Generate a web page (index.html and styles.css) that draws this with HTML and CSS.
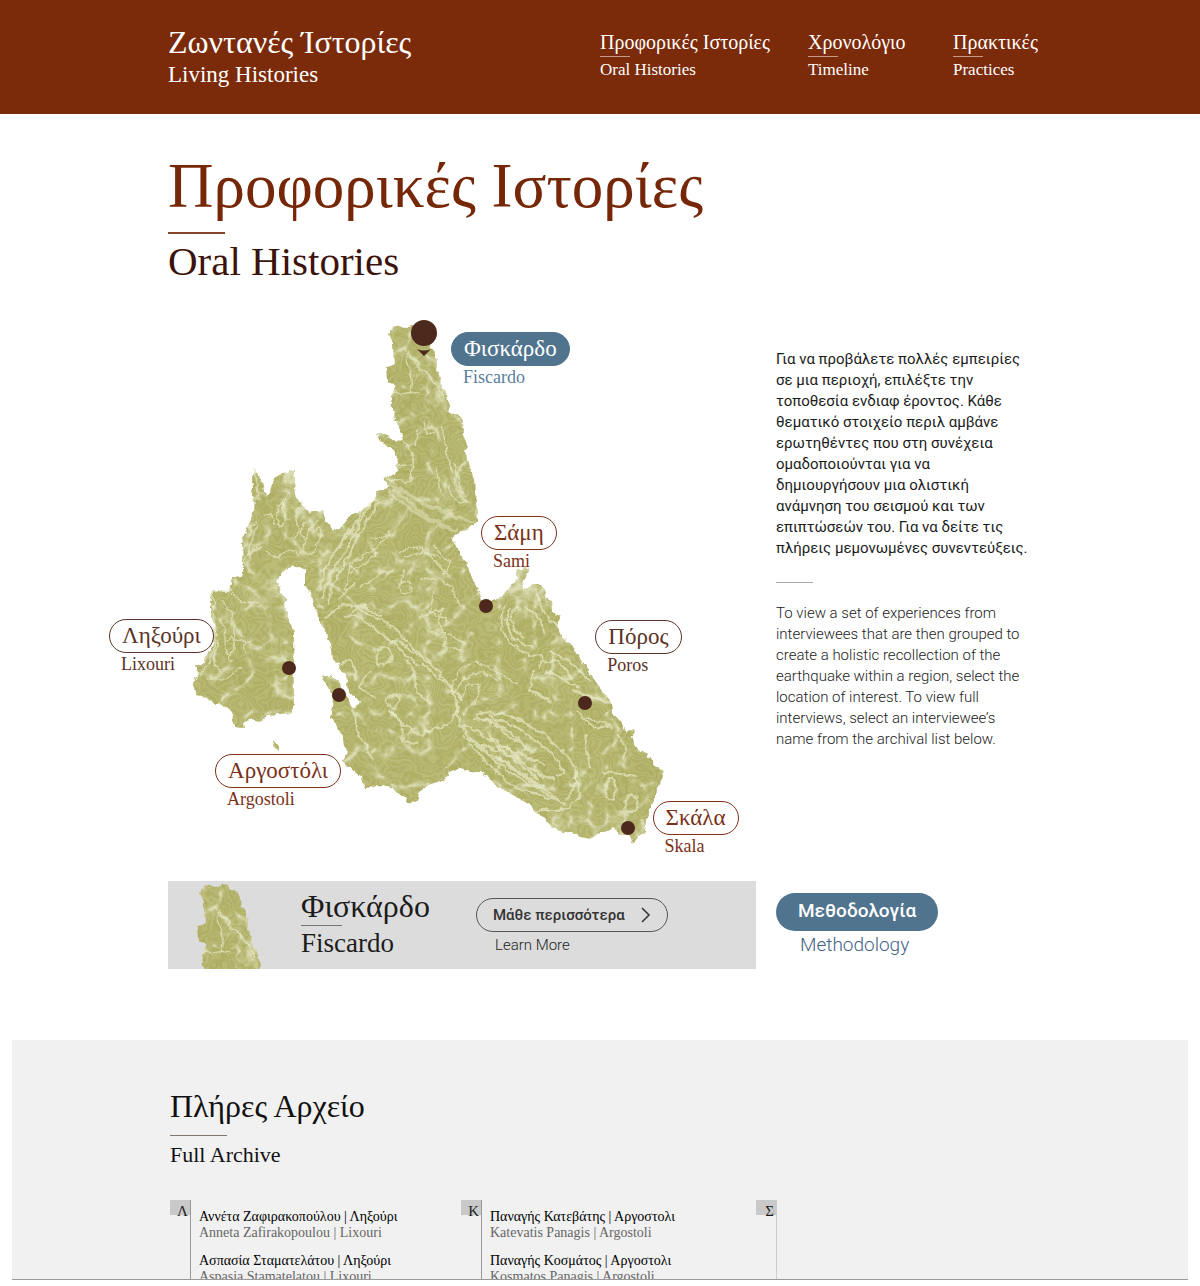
FILE: index.html
```html
<!DOCTYPE html>
<html lang="el">
<head>
<meta charset="utf-8">
<meta name="viewport" content="width=device-width, initial-scale=1">
<title>Προφορικές Ιστορίες | Oral Histories</title>
<link rel="stylesheet" href="styles.css">
</head>
<body>
<header class="site-header">
  <a class="brand" href="#">
    <span class="brand-el">Ζωντανές Ίστορίες</span>
    <span class="brand-en" lang="en">Living Histories</span>
  </a>
  <nav class="site-nav">
    <a href="#"><span class="nav-el">Προφορικές Ιστορίες</span><span class="nav-en" lang="en">Oral Histories</span></a>
    <a href="#"><span class="nav-el">Χρονολόγιο</span><span class="nav-en" lang="en">Timeline</span></a>
    <a href="#"><span class="nav-el">Πρακτικές</span><span class="nav-en" lang="en">Practices</span></a>
  </nav>
</header>

<main>
  <div class="page-title">
    <h1>Προφορικές Ιστορίες</h1>
    <p lang="en">Oral Histories</p>
  </div>

  <div class="explore">
    <div class="map">
      <svg class="island" viewBox="100 310 650 550" aria-hidden="true">
        <defs>
          <filter id="terrain" filterUnits="userSpaceOnUse" x="180" y="310" width="500" height="550" color-interpolation-filters="sRGB">
            <feTurbulence type="fractalNoise" baseFrequency="0.12" numOctaves="3" seed="4" result="rough"/>
            <feDisplacementMap in="SourceGraphic" in2="rough" scale="7" xChannelSelector="R" yChannelSelector="G" result="land"/>
            <feTurbulence type="fractalNoise" baseFrequency="0.02" numOctaves="4" seed="11"/>
            <feColorMatrix values="0 0 0 0 0.86  0 0 0 0 0.87  0 0 0 0 0.68  1 0 0 0 0.04"/>
            <feComponentTransfer result="lines"><feFuncA type="table" tableValues="0 .25 .05 .3 .05 .3 .05 .3 .05 .3 .05 .3 .05 .35 .05 .3 .1 .4 .1 .35 .1 .4 .1 .4 .1 .4 .1 .4 .1 .4"/></feComponentTransfer>
            <feComposite in="lines" in2="land" operator="in" result="contours"/>
            <feTurbulence type="turbulence" baseFrequency="0.028" numOctaves="3" seed="7"/>
            <feColorMatrix values="0 0 0 0 0.91  0 0 0 0 0.92  0 0 0 0 0.8  .9 0 0 0 0.1"/>
            <feComponentTransfer result="creases"><feFuncA type="table" tableValues=".8 .8 .8 .65 .32 .12 .04 0 0 0 0 0 0 0 0 0 0 0 0 0 0"/></feComponentTransfer>
            <feComposite in="creases" in2="land" operator="in" result="ridges"/>
            <feMerge><feMergeNode in="land"/><feMergeNode in="contours"/><feMergeNode in="ridges"/></feMerge>
          </filter>
          <g id="island-shape" filter="url(#terrain)">
            <path fill="#abaa5e" d="M389 333L395 326L405 329L412 325L424 330L433 350L437 360L436 370L441 377L440 385L445 390L448 400L450 406L448 412L453 415L461 415L462 423L463 433L467 445L465 452L468 460L471 470L474 480L475 492L477 503L478 513L475 523L468 528L457 534L451 539L458 547L462 557L468 567L472 578L480 593L482 601L495 601L502 597L508 588L515 583L517 570L525 566L529 572L523 583L523 590L533 585L540 585L547 593L545 597L552 602L553 612L561 617L557 625L562 637L573 648L582 662L592 677L602 690L612 703L613 713L622 725L627 733L634 730L632 737L640 752L647 753L653 765L661 770L662 780L656 793L651 807L647 820L646 832L638 837L633 843L630 836L622 833L613 829L603 831L593 838L580 836L567 832L553 828L543 817L527 803L513 795L497 786L490 777L477 772L460 768L450 772L443 780L428 785L420 792L418 802L407 801L393 788L383 785L373 787L365 788L362 778L350 768L342 762L347 752L343 737L338 727L330 718L333 700L327 685L322 677L330 674L338 683L345 695L352 708L356 707L359 703L356 695L349 694L348 682L342 672L338 663L332 657L330 642L322 623L317 613L310 593L304 585L304 570L297 567L290 566L282 572L277 582L280 592L287 598L284 610L291 625L293 633L294 713L267 715L260 722L253 720L243 723L244 729L235 728L232 713L223 704L217 705L205 697L197 695L193 682L200 673L194 666L203 663L212 643L215 627L212 610L210 603L213 591L228 592L233 578L243 575L243 563L242 543L248 527L253 513L254 497L252 477L256 471L262 482L265 495L270 492L273 480L283 473L295 472L295 482L298 500L310 513L323 510L325 520L332 530L343 527L348 517L360 513L375 500L377 490L390 488L385 477L395 475L398 463L395 448L386 448L377 434L388 435L395 443L402 438L398 423L393 413L391 402L396 388L388 380L387 367L394 365L393 343ZM273 740L277 745L281 747L279 750L275 748Z"/>
            <g fill="none" stroke="#e6e8c6" stroke-opacity=".75" stroke-width="1.5" stroke-linejoin="round">
              <path d="M405 350C412 362 424 357 419 372M405 353C409 372 417 380 409 395M415 363L430 378L445 398M394 393C405 395 412 390 420 394M402 438C414 450 416 462 410 482M397 466L413 464L410 482L388 480M418 430L415 445M424 420L426 436L435 432M440 425C448 440 444 460 454 472M453 462C460 470 456 488 466 496M448 485L453 500L470 503M436 467L440 492"/>
              <path stroke-width="3" stroke-opacity=".5" d="M393 489C410 500 420 518 448 527M389 485C411 494 428 512 474 521M388 491C408 508 429 526 459 530M400 487C416 500 430 508 452 512"/>
              <path stroke-width="2" d="M376 498C356 514 350 536 334 554C324 565 323 580 318 590M371 506C356 520 354 542 340 560C329 573 324 590 322 600M379 503C364 520 358 541 346 562C334 580 330 590 329 606M360 520C350 524 345 540 338 546"/>
              <path d="M282 503C270 518 283 535 285 518C288 511 278 505 282 503M255 470L259 500M318 520C298 540 303 562 314 550C326 537 320 520 316 530M292 540L309 520M248 529C266 510 252 538 244 565M247 555L262 547M267 550C280 570 287 540 300 556M262 515L270 512L274 525M302 500L295 522L304 540"/>
              <path d="M212 592C216 627 218 640 209 662L199 677M214 592L230 590L243 604L260 602M221 600L232 613L235 640L243 640L246 652M218 618C229 628 222 650 230 662M205 679L224 680L242 667M227 640C238 630 235 660 228 654M218 640L213 663L223 673"/>
              <path d="M390 529C384 545 366 556 354 560C344 570 350 581 344 590M400 552C414 542 430 553 442 560M404 558L425 551L446 572M397 589C403 575 416 580 410 592C402 599 396 585 404 570M380 552L350 574M384 570L359 589M371 538L391 534M337 600L355 582M420 580C438 572 450 582 460 605M435 546L450 564L443 575"/>
              <path stroke-width="2" d="M325 618L336 608C349 600 365 613 382 620C400 630 410 645 424 660M344 618C358 610 368 625 380 632L418 665M350 615L360 605L382 616M377 651C389 641 398 657 387 663C374 670 375 655 380 653M389 696C400 690 404 704 394 708C382 707 384 696 390 694M405 658L414 670L417 691L430 705M340 665C349 652 359 670 354 680M370 670L360 688L375 698M398 640C414 655 437 665 446 682L456 692M390 711L403 725L402 741L417 743M421 663L447 685L463 700"/>
              <path d="M421 617L443 608C431 626 450 633 443 646L461 650M426 632L449 634L466 646M436 589L429 612L450 621M450 689C460 658 480 660 493 670L518 684M453 697C464 671 485 666 497 682M460 702L467 685L480 685L475 705"/>
              <path stroke-width="2" d="M504 603C495 634 512 648 530 656C550 653 546 660 537 668M510 609C502 634 518 645 534 647M519 604C508 615 510 634 525 637M525 607L540 619L545 635M538 593L543 612L556 625M533 672L530 690L552 702M540 662L557 660L573 678M545 671L565 681L580 688M550 652L570 661L590 681"/>
              <path stroke-width="2" d="M573 690L593 697L612 703M577 712C587 725 605 715 611 728M581 718L598 729L610 725M458 702C453 723 465 735 480 745L516 758L545 779M461 735C483 748 495 761 510 772L565 805M467 738L500 760L525 777L560 800M462 725C485 735 510 745 530 770L555 780M470 745L510 785L566 804M475 715C501 705 535 725 556 745C572 758 580 771 575 785L566 800M481 722C505 715 526 734 547 749C562 763 568 780 556 775"/>
              <path stroke-width="2" d="M475 718L505 728L527 748M490 715L507 735L535 753M500 745L545 765M488 738L540 781M495 755L545 788M575 772L580 798L565 810L535 810M605 786C608 770 620 785 614 797C606 805 604 790 609 781M630 795C622 803 625 817 632 813C641 806 639 795 630 795M617 735L627 750L622 760M585 735L590 770M604 772L637 776M452 690L459 708L447 725L419 735L390 712M355 706C350 735 370 744 372 760"/>
            </g>
          </g>
        </defs>
        <use href="#island-shape"/>
        <g fill="#4c291c">
          <circle cx="424" cy="333" r="13"/>
          <path d="M417 349Q424 352 431 349L424 356Z"/>
          <circle cx="486" cy="606" r="7"/>
          <circle cx="289" cy="668" r="7"/>
          <circle cx="339" cy="695" r="7"/>
          <circle cx="585" cy="703" r="7"/>
          <circle cx="628" cy="828" r="7"/>
        </g>
      </svg>
      <a class="place place-fiscardo is-active" href="#fiscardo"><span class="pill">Φισκάρδο</span><span class="place-en" lang="en">Fiscardo</span></a>
      <a class="place place-sami" href="#sami"><span class="pill">Σάμη</span><span class="place-en" lang="en">Sami</span></a>
      <a class="place place-lixouri" href="#lixouri"><span class="pill">Ληξούρι</span><span class="place-en" lang="en">Lixouri</span></a>
      <a class="place place-poros" href="#poros"><span class="pill">Πόρος</span><span class="place-en" lang="en">Poros</span></a>
      <a class="place place-argostoli" href="#argostoli"><span class="pill">Αργοστόλι</span><span class="place-en" lang="en">Argostoli</span></a>
      <a class="place place-skala" href="#skala"><span class="pill">Σκάλα</span><span class="place-en" lang="en">Skala</span></a>
    </div>

    <div class="intro">
      <p class="intro-el">Για να προβάλετε πολλές εμπειρίες<br>σε μια περιοχή, επιλέξτε την<br>τοποθεσία ενδιαφ έροντος. Κάθε<br>θεματικό στοιχείο περιλ αμβάνε<br>ερωτηθέντες που στη συνέχεια<br>ομαδοποιούνται για να<br>δημιουργήσουν μια ολιστική<br>ανάμνηση του σεισμού και των<br>επιπτώσεών του. Για να δείτε τις<br>πλήρεις μεμονωμένες συνεντεύξεις.</p>
      <hr>
      <p class="intro-en" lang="en">To view a set of experiences from<br>interviewees that are then grouped to<br>create a holistic recollection of the<br>earthquake within a region, select the<br>location of interest. To view full<br>interviews, select an interviewee’s<br>name from the archival list below.</p>
    </div>

    <section class="selected" id="fiscardo">
      <svg class="selected-map" viewBox="380 322 75 88" aria-hidden="true"><use href="#island-shape"/></svg>
      <div class="selected-name">
        <h2>Φισκάρδο</h2>
        <p lang="en">Fiscardo</p>
      </div>
      <div class="learn">
        <button class="learn-button" type="button" aria-describedby="learn-en">Μάθε περισσότερα
          <svg viewBox="0 0 10 16" aria-hidden="true"><path d="M1 1L8 8L1 15" fill="none" stroke="currentColor" stroke-width="1.5"/></svg>
        </button>
        <span class="learn-en" id="learn-en" lang="en">Learn More</span>
      </div>
    </section>

    <div class="method">
      <button class="method-button" type="button" aria-describedby="method-en">Μεθοδολογία</button>
      <span class="method-en" id="method-en" lang="en">Methodology</span>
    </div>
  </div>
</main>

<section class="archive">
  <h2>Πλήρες Αρχείο</h2>
  <p class="archive-en" lang="en">Full Archive</p>
  <div class="archive-columns">
    <div class="group">
      <h3><span>Λ</span></h3>
      <ul>
        <li><a href="#"><b>Αννέτα Ζαφιρακοπούλου | Ληξούρι</b><span lang="en">Anneta Zafirakopoulou | Lixouri</span></a></li>
        <li><a href="#"><b>Ασπασία Σταματελάτου | Ληξούρι</b><span lang="en">Aspasia Stamatelatou | Lixouri</span></a></li>
      </ul>
    </div>
    <div class="group">
      <h3><span>Κ</span></h3>
      <ul>
        <li><a href="#"><b>Παναγής Κατεβάτης | Αργοστολι</b><span lang="en">Katevatis Panagis | Argostoli</span></a></li>
        <li><a href="#"><b>Παναγής Κοσμάτος | Αργοστολι</b><span lang="en">Kosmatos Panagis | Argostoli</span></a></li>
      </ul>
    </div>
    <div class="group group-light">
      <h3><span>Σ</span></h3>
    </div>
  </div>
</section>
</body>
</html>
```

FILE: styles.css
```css
* {
  box-sizing: border-box;
}

body {
  margin: 0;
  background: #fff;
  color: #1c1c1c;
  font-family: "Liberation Serif", "Times New Roman", serif;
}

h1, h2, h3, p, ul {
  margin: 0;
  padding: 0;
  font-weight: 400;
}

a {
  color: inherit;
  text-decoration: none;
}

.site-header {
  display: grid;
  grid-template-columns: minmax(0, 1fr) minmax(0, 1fr);
  padding: 24px 14%;
  background: #7b2b0a;
  color: #fff;
}

.brand-el,
.brand-en,
.nav-el,
.nav-en {
  display: block;
  white-space: nowrap;
}

.brand-el {
  font-size: 32px;
  line-height: 36px;
}

.brand-en {
  font-size: 23px;
  line-height: 30px;
}

.site-nav {
  display: grid;
  grid-template-columns: 208px 145px auto;
  padding-top: 6px;
}

.nav-el {
  font-size: 20px;
  line-height: 24px;
}

.nav-en {
  font-size: 17px;
  line-height: 24px;
}

.nav-en::before {
  content: "";
  display: block;
  width: 30px;
  height: 1px;
  margin: 2px 0 1px;
  background: #c79a86;
}

main {
  padding: 40px 14% 71px;
}

.page-title h1 {
  color: #762708;
  font-size: 63px;
  line-height: 64px;
  white-space: nowrap;
}

.page-title p {
  color: #3c130a;
  font-size: 41px;
  line-height: 52px;
}

.page-title p::before {
  content: "";
  display: block;
  width: 57px;
  height: 2px;
  margin: 14px 0 1px;
  background: #87452b;
}

.explore {
  display: grid;
  grid-template-columns: 588fr 256fr;
  column-gap: 20px;
  row-gap: 21px;
  margin-top: 23px;
}

.map {
  position: relative;
  margin: 0 6px 0 -68px;
}

.island {
  display: block;
  width: 100%;
}

.place {
  position: absolute;
  color: #7b3018;
}

.pill {
  display: block;
  height: 34px;
  padding: 0 12px;
  border: 1px solid currentColor;
  border-radius: 17px;
  background: #fff;
  font-size: 23px;
  line-height: 31px;
  white-space: nowrap;
}

.place-en {
  display: block;
  padding-left: 12px;
  font-size: 18px;
  line-height: 22px;
}

.place.is-active {
  color: #5a7f9c;
}

.is-active .pill {
  border-color: #50748e;
  background: #50748e;
  color: #fff;
}

.place-fiscardo { left: 54%; top: 4%; }
.place-sami { left: 58.6%; top: 37.4%; }
.place-lixouri { left: 1.4%; top: 56.2%; color: #5c3327; }
.place-poros { left: 76.2%; top: 56.4%; color: #5c3327; }
.place-argostoli { left: 17.7%; top: 80.7%; }
.place-skala { left: 85%; top: 89.2%; }

.intro {
  padding-top: 39px;
  font-family: Roboto, sans-serif;
  font-size: 15px;
  line-height: 21px;
  white-space: nowrap;
}

.intro-en {
  color: #222;
  font-weight: 300;
}

.intro hr {
  width: 37px;
  height: 1px;
  margin: 23px 0 20px;
  border: 0;
  background: #aaa;
}

.selected {
  display: flex;
  height: 88px;
  background: #dcdcdc;
}

.selected-map {
  width: 75px;
  height: 88px;
  margin-left: 23px;
}

.selected-name {
  width: 140px;
  margin-left: 35px;
  padding-top: 8px;
}

.selected-name h2 {
  font-size: 32px;
  line-height: 34px;
}

.selected-name p {
  font-size: 27px;
  line-height: 32px;
}

.selected-name p::before {
  content: "";
  display: block;
  width: 41px;
  height: 1px;
  margin: 2px 0 1px;
  background: #777;
}

.learn {
  margin-left: 35px;
  padding-top: 17px;
  color: #222;
  font-family: Roboto, sans-serif;
}

.learn-button {
  display: flex;
  align-items: center;
  gap: 16px;
  height: 34px;
  padding: 0 16px;
  border: 1px solid #555;
  border-radius: 17px;
  background: none;
  color: #333;
  font: 500 15px/32px Roboto, sans-serif;
}

.learn-button svg {
  width: 10px;
  height: 16px;
}

.learn-en {
  display: block;
  padding-left: 19px;
  font-size: 15px;
  font-weight: 300;
  line-height: 26px;
}

.method {
  padding-top: 12px;
  font-family: Roboto, sans-serif;
}

.method-button {
  display: block;
  height: 38px;
  padding: 0 22px 2px;
  border: 0;
  border-radius: 19px;
  background: #50748e;
  color: #fff;
  font: 500 19px/34px Roboto, sans-serif;
}

.method-en {
  display: block;
  padding-left: 24px;
  color: #3f6285;
  font-size: 19px;
  font-weight: 300;
  line-height: 28px;
}

.archive {
  margin: 0 12px 7px;
  padding: 48px 158px 0;
  border-bottom: 1px solid #999;
  background: #f1f1f1;
}

.archive h2 {
  color: #111;
  font-size: 32px;
  line-height: 36px;
}

.archive-en {
  color: #111;
  font-size: 22px;
  line-height: 28px;
}

.archive-en::before {
  content: "";
  display: block;
  width: 57px;
  height: 1px;
  margin: 11px 0 5px;
  background: #81756f;
}

.archive-columns {
  display: grid;
  grid-template-columns: 291px 295px 1fr;
  max-height: 79px;
  margin-top: 31px;
  overflow: hidden;
}

.group {
  display: flex;
  gap: 8px;
}

.group h3 {
  flex: none;
  width: 21px;
  min-height: 80px;
  border-right: 1px solid #999;
  font-size: 15px;
  line-height: 22px;
  text-align: right;
}

.group h3 span {
  display: block;
  height: 15px;
  padding-right: 2px;
  background: #c9c9c9;
}

.group-light h3 {
  border-right-color: #ccc;
}

.group ul {
  padding-top: 9px;
  list-style: none;
}

.group li {
  margin-bottom: 12px;
  white-space: nowrap;
}

.group b,
.group li span {
  display: block;
  font-size: 14px;
  line-height: 16px;
}

.group b {
  font-weight: 400;
  color: #000;
}

.group li span {
  color: #666;
}
```
